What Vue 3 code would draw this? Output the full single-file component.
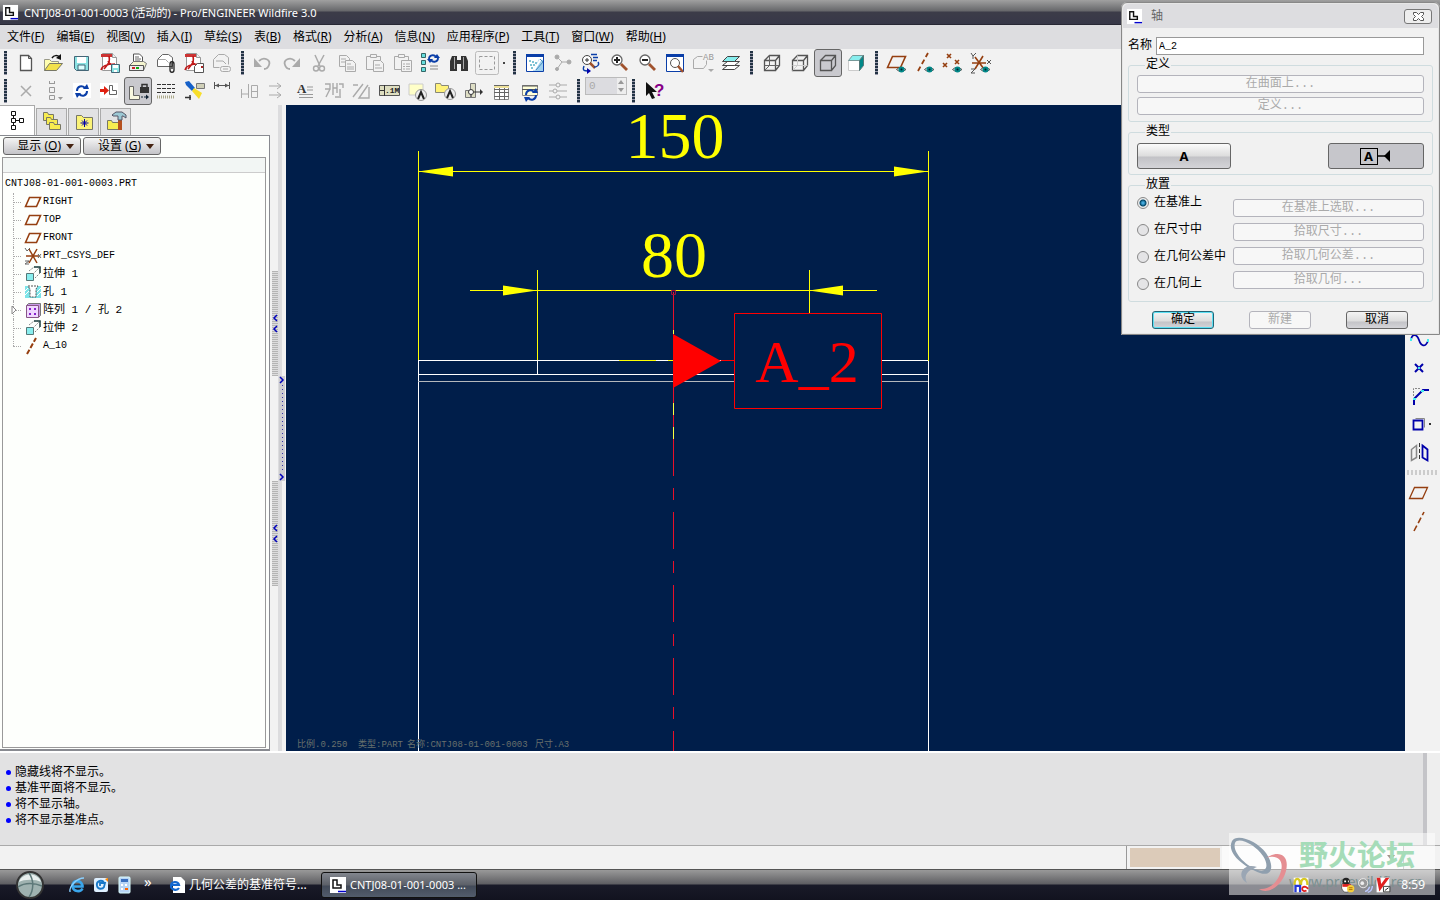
<script setup>
import { ref } from 'vue'

const menus = [
  ['文件', 'F'], ['编辑', 'E'], ['视图', 'V'], ['插入', 'I'], ['草绘', 'S'], ['表', 'B'], ['格式', 'R'],
  ['分析', 'A'], ['信息', 'N'], ['应用程序', 'P'], ['工具', 'T'], ['窗口', 'W'], ['帮助', 'H'],
]

const eye = '<path d="M11.5 18.5q4-4 9.500 0q-5 4-9.500 0z" fill="#dfeeee" stroke="#555"/><circle cx="16.500" cy="18.500" r="3" fill="#088"/><circle cx="16.500" cy="18.500" r="1" fill="#023"/>'
const pdf = '<path d="M4.500 2.500h10l4 4v13h-14z" fill="#fff" stroke="#999"/><path d="M14.500 2.500v4h4" fill="#eee" stroke="#999"/><path d="M3 3h11v3H3z" fill="#c33"/><path d="M11 5c1 5 1 6-5 13M10 10c2 4 5 5 9 5M3 19c1-5 8-6 14-6" fill="none" stroke="#c11818" stroke-width="1.600"/>'
const refresh = '<path d="M7 12c0-5 5-6 8-3M17 12c0 5-5 6-8 3" fill="none" stroke="#0a3ea8" stroke-width="2"/><path d="M13 10h6l-2-5zM11 14H5l2 5z" fill="#0a3ea8"/>'
const eyeglass = '<circle cx="10" cy="9" r="5" fill="#fff" stroke="#666" stroke-width="1.300"/><path d="M14 13l6 6" stroke="#a0522d" stroke-width="2.800"/>'
const cube = '<path d="M4.500 9.500h11v10h-11zM4.500 9.500l5-5h10v10l-4 5M15.500 9.500l4-5" fill="none" stroke="#555" stroke-width="1.300"/>'
const cubeHid = '<path d="M4.500 14.500h10M9.500 4.500v10h10M9.500 14.500l-5 5"'

const icons = {
  app: '<rect x="4" y="4" width="16" height="16" fill="#fff"/><path d="M7 7h4v5h4v3H7z" fill="none" stroke="#111" stroke-width="1.500"/><path d="M12 18.500h8" stroke="#00c" stroke-width="1.500"/>',
  new: '<path d="M6.500 4.500h8l3 3v12h-11z" fill="#fff" stroke="#555" stroke-width="1.300"/><path d="M14.500 4.500v3h3" fill="none" stroke="#555"/>',
  open: '<path d="M2.500 19.500v-11h5l2 2h7v3" fill="#ffffb0" stroke="#998"/><path d="M2.500 19.500l5-7h13l-6 7z" fill="#f2e14c" stroke="#776"/><path d="M10 7c2-3 5-3 8-1" fill="none" stroke="#111" stroke-width="1.500"/><path d="M19 3v6l-5-2z" fill="#111"/>',
  save: '<path d="M4.500 5.500h14v14h-12l-2-2z" fill="#8be3e3" stroke="#467"/><path d="M7 6h9v6H7z" fill="#fff"/><path d="M8 14h7v5H8z" fill="#dff" stroke="#467"/>',
  pdfsave: pdf + '<path d="M13.500 13.500h8v8h-8z" fill="#8be3e3" stroke="#467"/><path d="M15 14h5v3h-5zM16 19h3v2h-3z" fill="#fff"/>',
  print: '<path d="M7.500 11v-8h6l3 3v6" fill="#fff" stroke="#555"/><path d="M9 6h4M9 8h6M9 10h5" stroke="#666"/><path d="M3.500 14.500l4-4h10l3 2-3 7h-14z" fill="#f5f5d0" stroke="#777"/><path d="M3.500 14.500h14v5h-14z" fill="#eee" stroke="#555"/><path d="M6 17h3" stroke="#c22" stroke-width="2"/><path d="M10 17h3" stroke="#1a1" stroke-width="2"/>',
  mail: '<path d="M3.500 15.500v-7l5-5h6l4 3v9z" fill="#fff" stroke="#666"/><path d="M3.500 8.500h8l3 3" fill="none" stroke="#aaa"/><path d="M16 13v6c0 3 4 3 4 0v-6c0-3-4-3-4 0M18 12v6" fill="none" stroke="#222" stroke-width="1.300"/>',
  pdfmail: pdf + '<path d="M12.500 21.500v-6l3-3h6v9z" fill="#fff" stroke="#555"/><path d="M19 16h2" stroke="#a22" stroke-width="2"/>',
  maillink: '<g fill="none" stroke="#aaa"><path d="M3.500 16.500v-8l5-5h6l4 3v7M3.500 16.500h6M6 10h7l3 3"/><rect x="10.500" y="15.500" width="10" height="5" rx="2"/><path d="M13 18h5"/></g>',
  undo: '<path d="M8 10c5-5 12-1 10 4-1 3-3 4-5 4" fill="none" stroke="#aaa" stroke-width="1.800"/><path d="M3 7v9h8z" fill="#aaa"/>',
  redo: '<path d="M16 10c-5-5-12-1-10 4 1 3 3 4 5 4" fill="none" stroke="#aaa" stroke-width="1.800"/><path d="M21 7v9h-8z" fill="#aaa"/>',
  cut: '<path d="M8 4l5 11M17 4l-6 11" stroke="#aaa" stroke-width="1.500"/><circle cx="9" cy="17.500" r="2.500" fill="none" stroke="#aaa" stroke-width="1.400"/><circle cx="15" cy="17.500" r="2.500" fill="none" stroke="#aaa" stroke-width="1.400"/>',
  copy: '<g fill="#f2f2f2" stroke="#aaa"><path d="M4.500 4.500h7l3 3v8h-10z"/><path d="M10.500 9.500h7l3 3v8h-10z"/><path d="M6 8h5M6 11h4M12 13h4M12 16h7M12 18h7"/></g>',
  paste: '<g fill="#f2f2f2" stroke="#aaa"><path d="M3.500 5.500h14v13h-14z"/><path d="M7.500 3.500h6v3h-6z"/><path d="M10.500 9.500h7l3 3v8h-10z"/><path d="M12 14h5M12 17h7"/></g>',
  pastesp: '<g fill="#f2f2f2" stroke="#aaa"><path d="M3.500 5.500h14v13h-14z"/><path d="M7.500 3.500h6v3h-6z"/><path d="M10.500 9.500h10v11h-10z"/><path d="M12 13h2M15 13h4M12 15.500h2M15 15.500h4M12 18h2M15 18h4"/></g>',
  regen: '<g fill="#6dd" stroke="#366"><path d="M2.500 2.500h4v4h-4zM2.500 9.500h4v4h-4zM2.500 16.500h4v4h-4z"/></g><path d="M10 8c0-4 5-5 7-2M19 7c0 4-5 5-7 2" fill="none" stroke="#0a3ea8" stroke-width="1.800"/><path d="M15 7h6l-3-4zM14 8H8l3 4z" fill="#0a3ea8"/><path d="M11 15h8M11 18h8" stroke="#888"/>',
  find: '<path d="M5 5h5v4h4V5h5l2 5v10h-7v-7h-4v7H3V10z" fill="#333"/><path d="M7.500 6v12M16.500 6v12" stroke="#aaa"/>',
  select: '<rect x="0.500" y="0.500" width="23" height="23" rx="2" fill="none" stroke="#bbb"/><path d="M4.500 5.500h15v13h-15z" fill="none" stroke="#999" stroke-dasharray="3 2"/>',
  redraw: '<path d="M3.500 3.500h17v17h-17z" fill="#fff" stroke="#0a3ea8"/><path d="M3 3h18v3H3z" fill="#0a3ea8"/><path d="M20 20V9l-4-1-6 12z" fill="#9fd0ee"/><path d="M6 10h2M7 14h2M9 11h2M10 14h2M8 17h2M12 12h2" stroke="#08a"/><path d="M18 8l-7 11" stroke="#fff" stroke-width="2"/><path d="M17 8l3 3-7 8" fill="none" stroke="#4a90c0"/>',
  orient: '<g fill="#aaa" stroke="#aaa"><circle cx="6" cy="6" r="2"/><circle cx="6" cy="18" r="1.500"/><circle cx="18" cy="11" r="2"/><path d="M6 6l5 5h7M11 11l-5 7" fill="none"/></g>',
  spin: '<circle cx="8" cy="9" r="4.500" fill="#fff" stroke="#444"/><path d="M8 7v4M6 9h4" stroke="#333"/><path d="M11 12l5 5" stroke="#a0522d" stroke-width="2.500"/><path d="M12 3.500h6M14 6.500h5M14 9.500h4M19 11c2 3-1 5-4 5M5 15c-2 5 1 5 4 5" fill="none" stroke="#0a3ea8" stroke-width="1.400"/><path d="M8 17v6l4-3z" fill="#00a"/>',
  zin: eyeglass + '<path d="M7 9h6M10 6v6" stroke="#222" stroke-width="2"/>',
  zout: eyeglass + '<path d="M7 9h6" stroke="#222" stroke-width="2"/>',
  zfit: '<path d="M3.500 3.500h17v17h-17z" fill="#fff" stroke="#0a3ea8"/><path d="M3 3h18v3H3z" fill="#0a3ea8"/><circle cx="12" cy="12" r="4.500" fill="#fff" stroke="#555"/><path d="M15 15l5 6" stroke="#a0522d" stroke-width="2.500"/>',
  saved: '<path d="M2.500 17.500v-9l4-3h5M2.500 17.500h10l3-4v-4" fill="none" stroke="#aaa"/><text x="12" y="9" font-size="9" font-family="Liberation Mono,monospace" fill="#999">AB</text><path d="M17 18h6l-3 3z" fill="#aaa"/>',
  layers: '<path d="M3.500 18.500l5-4h12l-5 4z" fill="#fff" stroke="#444"/><path d="M3.500 14.500l5-4h12l-5 4z" fill="#fff" stroke="#444"/><path d="M3.500 10.500l5-5h12l-5 5z" fill="#8ee" stroke="#444"/>',
  wire: cube + cubeHid + ' fill="none" stroke="#666"/>',
  hidden: cube + cubeHid + ' fill="none" stroke="#ccc"/>',
  nohidden: cube,
  shaded: '<path d="M4.500 9.500h11v10h-11z" fill="#fff" stroke="#ccc"/><path d="M4.500 9.500l4-5h11l-4 5z" fill="#8ee" stroke="#799"/><path d="M15.500 9.500l4-5v10l-4 5z" fill="#088" stroke="#577"/>',
  dplane: '<path d="M2.500 16.500l5-11h13l-5 11z" fill="none" stroke="#953f10" stroke-width="1.600"/>' + eye,
  daxis: '<path d="M5 20L15 2" stroke="#953f10" stroke-width="1.800" stroke-dasharray="5 3"/>' + eye,
  dpoint: '<path d="M6 3l4 4M10 3l-4 4M2 12l4 4M6 12l-4 4M14 9l4 4M18 9l-4 4" stroke="#953f10" stroke-width="1.600"/>' + eye,
  dcsys: '<path d="M3 12h14M6 6l9 12M14 5L6 18" stroke="#953f10" stroke-width="1.600"/><path d="M2 2l2 3 3-3M4 5v3M18 9l4 4M22 9l-4 4M2 18h4l-4 4h4" fill="none" stroke="#555"/>' + eye,
  xx: '<path d="M7 7l10 10M17 7L7 17" stroke="#aaa" stroke-width="1.500"/>',
  stack: '<path d="M7.500 5V2M12.500 5V2M7.500 4.500h5M7.500 8.500h5v5h-5zM7.500 16.500h5v4h-5z" fill="none" stroke="#999"/><path d="M16 18h5l-2.500 3z" fill="#999"/>',
  update: '<path d="M3 4h18v15H3z" fill="#fff"/>' + refresh,
  insert: '<path d="M2 4h18v15H2z" fill="#fff"/><path d="M11.500 6.500v9h7v-4h-4v-5z" fill="#fff" stroke="#666"/><path d="M2 10h4V7l5 4.500-5 4.500v-3H2z" fill="#e02010"/>',
  lock: '<path d="M3.500 7.500h4v9h6v4h-10z" fill="#f7f7e0" stroke="#666"/><path d="M14 8h9v6h-9z" fill="#333"/><path d="M16 8V5.500h5V8" fill="none" stroke="#333" stroke-width="1.500"/><path d="M15 18h5" stroke="#123" stroke-dasharray="2 1"/><path d="M20 15.500l3 2.500-3 2.500z" fill="#123"/>',
  lines: '<path d="M3 5.500h18M3 9.500h18M3 13.500h18" stroke="#333" stroke-dasharray="4 1"/><path d="M3 18h18" stroke="#aaa788" stroke-width="3" stroke-dasharray="1 1"/>',
  torch: '<path d="M14.500 4.500h8v5h-8z" fill="#cfcfb8" stroke="#777"/><path d="M3 3l4-1 6 7-3 3-6-6z" fill="#1560c8"/><path d="M12 9l8 5-3 6-7-8z" fill="#f8de2a"/><path d="M3 18.500h6M8 16v5" stroke="#333" stroke-width="1.500"/>',
  dim: '<path d="M4.500 3v7M19.500 3v7M5 6.500h14" stroke="#555"/><path d="M5 6.500l4-2v4zM19 6.500l-4-2v4z" fill="#555"/>',
  dim2: '<g fill="none" stroke="#aaa"><path d="M3.500 10v9M10.500 5v14M4 15h7M13.500 6.500h6v12h-6zM13 12.500h7"/></g>',
  dim3: '<path d="M3 7h12M3 16h12M11 4l4 3-4 3M11 13l4 3-4 3" fill="none" stroke="#aaa"/>',
  note: '<text x="3" y="14" font-size="13" font-weight="bold" font-family="Liberation Serif,serif" fill="#333">A</text><path d="M13 8h6M13 11h6M5 15.500h14M5 18.500h14" stroke="#999"/>',
  sym1: '<path d="M3 5h5v5H3M8 10l-4 8M11 4v12M15 4v10M11 9h4M17 5h4v4M18 10v7M13 18h6" fill="none" stroke="#aaa" stroke-width="1.400"/>',
  sym2: '<path d="M3 18L13 5M3 6h5M18 6L9 19h10V8" fill="none" stroke="#aaa" stroke-width="1.400"/>',
  gtol: '<path d="M1.500 6.500h20v10h-20z" fill="#dedec0" stroke="#555"/><path d="M6.500 6v11M2 11.500h4" stroke="#333"/><text x="7" y="14" font-size="8" font-weight="bold" font-family="Liberation Mono,monospace" fill="#222">.1M</text>',
  surf: '<path d="M3 5h14v11H3z" fill="#ffffc8" stroke="#ccc"/><circle cx="15" cy="16" r="5.500" fill="#eee" stroke="#999"/><path d="M12 20l3-7 3 7" fill="none" stroke="#222" stroke-width="2"/>',
  symb: '<path d="M1.500 13.500v-9h5l1 2h7v7z" fill="#fff27a" stroke="#887"/><circle cx="16" cy="15" r="5.500" fill="#eee" stroke="#999"/><path d="M13 19l3-7 3 7" fill="none" stroke="#222" stroke-width="2"/>',
  bal: '<path d="M8.500 4.500h5v14h-5zM3.500 11.500h6v7h-6z" fill="#ddddc4" stroke="#777"/><circle cx="9" cy="13" r="2.500" fill="#fff" stroke="#333"/><path d="M12 13h7" stroke="#333"/><path d="M18 10l3 3-3 3z" fill="#333"/>',
  table: '<path d="M4.500 6.500h14v14h-14z" fill="#fff" stroke="#888"/><path d="M4 6h15v3H4z" fill="#eee19a"/><path d="M4 6.500h15M4 10.500h15M4 13.500h15M4 17.500h15M9.500 9v12M14.500 9v12" stroke="#666"/>',
  tableup: '<path d="M4.500 6.500h15v10h-15z" fill="#ffffd8" stroke="#888"/><path d="M4 7h16M4 10.500h16" stroke="#555"/><g transform="translate(1 4)">' + refresh + '</g>',
  sliders: '<g stroke="#aaa" fill="#f2f2f2"><path d="M3 6h18M3 12h18M3 18h18"/><circle cx="12" cy="6" r="2"/><circle cx="9" cy="12" r="2"/><circle cx="12" cy="18" r="2"/></g>',
  help: '<path d="M4 3v14l3-3 3 6 3-1-3-6h5z" fill="#111"/><text x="12" y="17" font-size="17" font-weight="bold" font-family="Liberation Sans,sans-serif" fill="#808">?</text>',
  spline: '<path d="M4 12c1-7 6-6 8 0s6 8 9 1" fill="none" stroke="#00a" stroke-width="1.800"/><path d="M4 10v3M21 11v3" stroke="#4ee" stroke-width="2"/>',
  point: '<path d="M8 8l8 8M16 8l-8 8" stroke="#00a" stroke-width="2"/><path d="M11 11h2v2h-2z" fill="#4ee"/>',
  chamfer: '<path d="M6.500 12V4.500H14" fill="none" stroke="#888" stroke-dasharray="2 1"/><path d="M7 21v-6l9-9h6" fill="none" stroke="#00a" stroke-width="2"/><path d="M6 14h3v2H6zM14 6h3v2h-3z" fill="#4ee"/>',
  offset: '<path d="M8.500 6.500h9v9" fill="none" stroke="#888"/><path d="M6.500 8.500h9v9h-9z" fill="#f2f2f2" stroke="#00a" stroke-width="1.800"/><path d="M22 11h2v2h-2z" fill="#333"/>',
  mirror: '<path d="M4.500 9.500l5-4v12l-5 3z" fill="none" stroke="#888" stroke-width="1.500"/><path d="M12.500 3v18" stroke="#333" stroke-dasharray="4 2"/><path d="M15.500 5.500l5 4v11l-5-3z" fill="none" stroke="#00a" stroke-width="1.800"/>',
  rplane: '<path d="M2.500 17.500l5-11h13l-5 11z" fill="none" stroke="#953f10" stroke-width="1.300"/>',
  raxis: '<path d="M7 22L17 3" stroke="#953f10" stroke-width="1.600" stroke-dasharray="6 3"/>',
  tplane: '<path d="M4.500 16.500l4-9h11l-4 9z" fill="none" stroke="#953f10" stroke-width="1.600"/>',
  tcsys: '<path d="M5 12h13M8 5l8 14M16 5L8 19" stroke="#953f10" stroke-width="1.500"/><path d="M4 4l2 3 3-3M17 10l3 4M20 10l-3 4M4 17h4l-4 3h4" fill="none" stroke="#666"/>',
  extrude: '<path d="M5.500 11.500h7v7h-7z" fill="#8ee" stroke="#577"/><path d="M8 9l5-4h6v6l-5 5M12 12l6-6" fill="none" stroke="#888" stroke-dasharray="2 1"/><path d="M13 5h6v6" fill="none" stroke="#244" stroke-width="1.500"/>',
  hole: '<path d="M4 6h16v12H4z" fill="#7de4e8"/><path d="M7 6h10l-2 3v8H9V9z" fill="#fff" stroke="#555" stroke-dasharray="2 1"/><path d="M4 11l3-3M4 15l4-4M16 12l4-4M16 16l4-4" stroke="#fff"/>',
  pattern: '<path d="M5.500 7.500l2-2h12v12l-2 2" fill="#c79ae6" stroke="#777"/><path d="M5.500 7.500h12v12h-12z" fill="#f0d8ff" stroke="#858"/><path d="M8 10h2v2H8zM13 10h2v2h-2zM8 15h2v2H8zM13 15h2v2h-2z" fill="#82c"/>',
  taxis: '<path d="M6 20L15 4" stroke="#953f10" stroke-width="2" stroke-dasharray="5 2"/>',
  tree: '<path d="M6.500 2.500h4v4h-4zM6.500 9.500h4v4h-4zM6.500 16.500h4v4h-4zM14.500 9.500h4v4h-4z" fill="#fff" stroke="#111"/><path d="M8.500 7v2M8.500 14v2M11 11.500h3" stroke="#111"/>',
  folders: '<g fill="#f7ec50" stroke="#776"><path d="M3.500 10.500v-8h4l1 2h5v6z"/><path d="M6.500 14.500v-7h4l1 2h6v5z"/><path d="M9.500 19.500v-7h4l1 2h6v5z"/></g>',
  fav: '<path d="M4.500 19.500v-14h5l2 2h9v12z" fill="#fbf377" stroke="#776"/><path d="M12.500 9v8M8.500 13h8M10 10.500l5 5M15 10.500l-5 5" stroke="#00a"/>',
  tools: '<path d="M3.500 19.500v-9h4l1 2h6v7z" fill="#f7ec50" stroke="#776"/><path d="M14 10h4v10h-4z" fill="#b5501e"/><path d="M8 5l4-3h6l4 3v3l-3-2h-1v4h-4V6H9z" fill="#9cc8d4" stroke="#556"/>',
  ie: '<path d="M17.500 15.500c-2 4-9 3.500-10-2-.5-7 8-7 10-1v1H8" fill="none" stroke="#3aa6ec" stroke-width="2.600"/><path d="M5 19C4 13 12 5 19 5" fill="none" stroke="#8ad0ff" stroke-width="1.300"/>',
  outlook: '<rect x="5" y="5" width="14" height="14" rx="2" fill="#dff0ff"/><path d="M15 9c-4-3-8 0-7 4 1 4 6 3 7 1l1-4h-5v3" fill="none" stroke="#1878c8" stroke-width="1.800"/><path d="M16 6l3-1v4z" fill="#f80"/>',
  calc: '<rect x="6" y="4" width="11" height="16" rx="1" fill="#b8d4f4" stroke="#dff"/><path d="M8 6h7v3H8z" fill="#3a70c0"/><path d="M8 11h2v2H8zM12 11h2v2h-2zM8 15h2v2H8z" fill="#fff"/><path d="M12 15h3v2h-3z" fill="#f60"/>',
  iepage: '<path d="M8 4h8l4 4v12H8z" fill="#fff"/><path d="M14 15c-2 3-8 2-8-2 0-5 7-5 8-1H7" fill="none" stroke="#1268d0" stroke-width="2.200"/>',
  net: '<path d="M4 4h16v16H4z" fill="#fff"/><path d="M5 12c0-9 6-9 6 0M12 12c0-9 7-9 7 0" fill="none" stroke="#d8c820" stroke-width="2.500"/><path d="M6 20v-7h5v7" fill="none" stroke="#2438d8" stroke-width="2.500"/><path d="M18 18c-5 3-7-5-1-4l3 2" fill="none" stroke="#e02020" stroke-width="2"/>',
  qq: '<ellipse cx="11" cy="14" rx="5" ry="6" fill="#fff" stroke="#555"/><circle cx="11" cy="8" r="4" fill="#222"/><path d="M7 11h9v3H7z" fill="#d22"/><path d="M9 8h2M13 8h1" stroke="#fff" stroke-width="2"/><circle cx="16" cy="16" r="4" fill="#f6cf3c"/><path d="M14 15h4M14 17h4" stroke="#a60"/>',
  speaker: '<circle cx="10" cy="10" r="5" fill="#999" stroke="#eee"/><circle cx="9" cy="10" r="2" fill="#eee"/><path d="M15 20c3-1 5-4 5-7M12 19c3 0 4-2 5-5" fill="none" stroke="#bbc8ff" stroke-width="1.500"/>',
  kav: '<path d="M5 4h14v16H5z" fill="#fff"/><path d="M5 4l3 15 11-15h-4l-5 7-1-7z" fill="#e02020"/><path d="M12.500 13.500h7v6h-7z" fill="#fff" stroke="#333"/><path d="M14 18l4-3" stroke="#111"/>',
}

const row1 = ['new', 'open', 'save', 'pdfsave', 'print', 'mail', 'pdfmail', 'maillink', '|', 'undo', 'redo', 'cut', 'copy', 'paste', 'pastesp', 'regen', 'find', 'select', '.', '|', 'redraw', 'orient', 'spin', 'zin', 'zout', 'zfit', 'saved', 'layers', '|', 'wire', 'hidden', 'nohidden', 'shaded', '|', 'dplane', 'daxis', 'dpoint', 'dcsys']
const row2 = ['xx', 'stack', 'update', 'insert', 'lock', 'lines', 'torch', 'dim', 'dim2', 'dim3', 'note', 'sym1', 'sym2', 'gtol', 'surf', 'symb', 'bal', 'table', 'tableup', 'sliders', '|']
const pressed = ['nohidden', 'lock']
const tabs = ['tree', 'folders', 'fav', 'tools']
const treeItems = [
  ['tplane', 'RIGHT'], ['tplane', 'TOP'], ['tplane', 'FRONT'], ['tcsys', 'PRT_CSYS_DEF'],
  ['extrude', '拉伸 1', true], ['hole', '孔 1', true], ['pattern', '阵列 1 / 孔 2', true], ['extrude', '拉伸 2', true], ['taxis', 'A_10'],
]
const placements = [
  ['在基准上', '在基准上选取...'], ['在尺寸中', '拾取尺寸...'], ['在几何公差中', '拾取几何公差...'], ['在几何上', '拾取几何...'],
]
const placement = ref(0)
const axisName = ref('A_2')
const count = ref('0')
const sideTools = ['spline', 'point', 'chamfer', 'offset', 'mirror', '-', 'rplane', 'raxis']
const messages = ['隐藏线将不显示。', '基准平面将不显示。', '将不显示轴。', '将不显示基准点。']
const grips = ['l', 'r', 'l']
const chevron = { l: 'M5 1L2 4l3 3', r: 'M1 1l3 3-3 3' }
</script>

<template>
  <div class="desktop">
    <header class="titlebar">
      <svg class="ic small" viewBox="3 3 18 18" v-html="icons.app"></svg>
      <span>CNTJ08-01-001-0003 (活动的) - Pro/ENGINEER Wildfire 3.0</span>
    </header>

    <nav class="menubar">
      <button v-for="m in menus" :key="m[1]">{{ m[0] }}(<u>{{ m[1] }}</u>)</button>
    </nav>

    <div class="toolbars">
      <div class="toolrow">
        <i class="sep first"></i>
        <template v-for="(t, i) in row1" :key="i">
          <i v-if="t === '|'" class="sep"></i>
          <i v-else-if="t === '.'" class="dot"></i>
          <button v-else class="tool" :class="{ pressed: pressed.includes(t) }" :aria-label="t"><svg class="ic" viewBox="0 0 24 24" v-html="icons[t]"></svg></button>
        </template>
      </div>
      <div class="toolrow">
        <i class="sep first"></i>
        <template v-for="(t, i) in row2" :key="i">
          <i v-if="t === '|'" class="sep"></i>
          <button v-else class="tool" :class="{ pressed: pressed.includes(t) }" :aria-label="t"><svg class="ic" viewBox="0 0 24 24" v-html="icons[t]"></svg></button>
        </template>
        <span class="spinner">
          <input v-model="count" aria-label="count" disabled>
          <svg width="9" height="16"><path d="M1 6l3-4 3 4zM1 10l3 4 3-4z" fill="#999" /></svg>
        </span>
        <i class="sep"></i>
        <button class="tool" aria-label="help"><svg class="ic" viewBox="0 0 24 24" v-html="icons.help"></svg></button>
      </div>
    </div>

    <main class="work">
      <aside class="nav">
        <div class="tabs">
          <button v-for="(t, i) in tabs" :key="t" :class="{ on: i === 0 }" :aria-label="t"><svg class="ic" viewBox="0 0 24 24" v-html="icons[t]"></svg></button>
        </div>
        <div class="navbody">
          <div class="navbtns">
            <button>显示 (<u>O</u>)<i class="caret"></i></button>
            <button>设置 (<u>G</u>)<i class="caret"></i></button>
          </div>
          <div class="treebox">
            <div class="treehead"></div>
            <div class="root">CNTJ08-01-001-0003.PRT</div>
            <ul>
              <li v-for="(t, i) in treeItems" :key="i" :class="{ cjk: t[2], last: i === 8 }">
                <svg v-if="i === 6" class="expand" width="6" height="10"><path d="M1 1l4 4-4 4z" fill="#fff" stroke="#888" /></svg>
                <i class="branch"></i>
                <svg class="ic tic" viewBox="0 0 24 24" v-html="icons[t[0]]"></svg>
                <span>{{ t[1] }}</span>
              </li>
            </ul>
          </div>
        </div>
      </aside>

      <div class="splitter">
        <div v-for="(g, i) in grips" :key="i" class="grip" :class="g">
          <svg v-for="n in 2" :key="n" width="6" height="8"><path :d="chevron[g]" fill="none" stroke="#00b" stroke-width="1.500" /></svg>
        </div>
      </div>

      <svg class="canvas">
        <g fill="none" stroke="#ffff00">
          <path d="M132.500 46v210M642.500 46v210M132 66.500h510M184 185.500h407M251.500 165v91M523.500 165v43" />
        </g>
        <g fill="none" stroke="#fff">
          <path d="M132.500 256v390M642.500 256v390M132 255.500h316M596 255.500h46M132 269.500h316M596 269.500h46M251.500 256v14" />
          <path d="M132 276.500h316M596 276.500h46" stroke="#b4b8bc" />
          <path d="M333 255.500h37M382 255.500h5" stroke="#ffff00" />
        </g>
        <g fill="#ffff00">
          <path d="M132 66.500l35-5v10zM642 66.500l-34-5v10zM251 185.500l-34-5v10zM523 185.500l34-5v10z" />
          <text x="389" y="53" class="cad">150</text>
          <text x="388" y="172" class="cad">80</text>
        </g>
        <g fill="none" stroke="#e8102a">
          <path d="M387.500 187v147" />
          <path d="M387.500 334v312" stroke-dasharray="37 12 12 12" />
          <path d="M385.500 185.500h4v4h-4z" stroke="#a01040" />
        </g>
        <path d="M387.500 225v4M387.500 298v12M387.500 322v12" stroke="#ffff40" />
        <path d="M387 229v54l48-27z" fill="#f00" />
        <path d="M435 255.500h13M448.500 208.500h147v95h-147z" fill="none" stroke="#f00" />
        <text x="521" y="277" class="cad tag">A_2</text>
        <g class="info">
          <text x="11" y="642">比例.0.250</text>
          <text x="72" y="642">类型:PART</text>
          <text x="121" y="642">名称:CNTJ08-01-001-0003</text>
          <text x="249" y="642">尺寸.A3</text>
        </g>
      </svg>

      <div class="side">
        <template v-for="t in sideTools" :key="t">
          <i v-if="t === '-'" class="hgrip"></i>
          <button v-else class="tool" :aria-label="t"><svg class="ic wide" viewBox="0 0 24 24" v-html="icons[t]"></svg></button>
        </template>
      </div>
    </main>

    <section class="messages">
      <ul><li v-for="m in messages" :key="m">{{ m }}</li></ul>
    </section>

    <div class="status"><span class="block"></span><span class="filter"><i class="caret"></i></span></div>

    <footer class="taskbar">
      <button class="orb" aria-label="start"><svg width="30" height="30"><circle cx="15" cy="15" r="13" fill="#9fb2b0" stroke="#333" stroke-width="2" /><path d="M4 12c3-10 19-10 22 0-5-3-17-3-22 0z" fill="#e8efee" /><path d="M14 3c5 7 5 17 0 24M3 17c7-5 17-4 24-1" fill="none" stroke="#5d7878" stroke-width="1.500" /></svg></button>
      <div class="quick">
        <button aria-label="ie"><svg class="ic" viewBox="0 0 24 24" v-html="icons.ie"></svg></button>
        <button aria-label="outlook"><svg class="ic" viewBox="0 0 24 24" v-html="icons.outlook"></svg></button>
        <button aria-label="calc"><svg class="ic" viewBox="0 0 24 24" v-html="icons.calc"></svg></button>
        <span class="more">»</span>
      </div>
      <button class="task"><svg class="ic" viewBox="0 0 24 24" v-html="icons.iepage"></svg>几何公差的基准符号...</button>
      <button class="task active"><svg class="ic" viewBox="0 0 24 24" v-html="icons.app"></svg>CNTJ08-01-001-0003 ...</button>
      <div class="tray">
        <svg class="ic net" viewBox="0 0 24 24" v-html="icons.net"></svg>
        <svg class="ic" viewBox="0 0 24 24" v-html="icons.qq"></svg>
        <svg class="ic" viewBox="0 0 24 24" v-html="icons.speaker"></svg>
        <svg class="ic" viewBox="0 0 24 24" v-html="icons.kav"></svg>
        <time>8:59</time>
      </div>
    </footer>

    <section class="dialog" role="dialog" aria-labelledby="dlg-title">
      <div class="dhead">
        <svg class="ic small" viewBox="3 3 18 18" v-html="icons.app"></svg>
        <span id="dlg-title">轴</span>
        <button class="close" aria-label="close"><svg width="13" height="11"><path d="M1.500 1.500h3l2 2 2-2h3v2l-2 2 2 2v2h-3l-2-2-2 2h-3v-2l2-2-2-2z" fill="#fff" stroke="#555" /></svg></button>
      </div>
      <div class="dbody">
        <div class="name"><label for="axis-name">名称</label><input id="axis-name" v-model="axisName"></div>
        <fieldset class="def">
          <legend>定义</legend>
          <button class="btn" disabled>在曲面上...</button>
          <button class="btn" disabled>定义...</button>
        </fieldset>
        <fieldset class="type">
          <legend>类型</legend>
          <div class="types">
            <button class="btn kind">A</button>
            <button class="btn kind down"><span class="boxed">A</span><svg width="15" height="14"><path d="M0 7h9" stroke="#000" stroke-width="1.500" /><path d="M12 1v12L6 7z" /></svg></button>
          </div>
        </fieldset>
        <fieldset class="place">
          <legend>放置</legend>
          <div class="cols">
            <div class="radios">
              <label v-for="(p, i) in placements" :key="i"><input type="radio" name="place" :value="i" v-model="placement">{{ p[0] }}</label>
            </div>
            <div class="picks"><button v-for="p in placements" :key="p[1]" class="btn" disabled>{{ p[1] }}</button></div>
          </div>
        </fieldset>
        <div class="actions">
          <button class="btn solid default">确定</button>
          <button class="btn" disabled>新建</button>
          <button class="btn solid">取消</button>
        </div>
      </div>
    </section>

    <div class="watermark">
      <svg width="60" height="60" viewBox="0 0 60 60">
        <path fill-rule="evenodd" d="M3 8C8 0 28 8 37 20c9 13 6 24-6 20C15 34-3 20 3 8zM6 10c-3 9 11 23 23 27 9 3 11-5 5-14C27 12 9 3 6 10z" fill="#8f9fae" />
        <path d="M37 25c12-8 24-4 20 13-4 15-18 24-27 18 12 1 19-8 22-18 3-11-4-17-15-13z" fill="#e58e92" />
        <path d="M28 34c-13-5-22 8-10 16-4-8 1-13 10-16z" fill="#9aa6b4" />
      </svg>
      <div class="wmtext"><strong>野火论坛</strong><span>www.proewildfire.cn</span></div>
    </div>
  </div>
</template>

<style>
html, body { margin: 0; height: 100%; overflow: hidden; }
#app { height: 100%; }
</style>

<style scoped>
.desktop {
  position: relative; height: 100vh; display: flex; flex-direction: column; background: #f2f2f2; color: #000;
  font: 12px/16px "Noto Sans", "Noto Sans CJK SC", sans-serif;
}
button { border: 0; padding: 0; margin: 0; background: none; color: inherit; font: inherit; }
ul { list-style: none; margin: 0; padding: 0; }
.ic { width: 24px; height: 24px; display: block; flex: none; }
.ic.small { width: 17px; height: 17px; }

.titlebar {
  height: 25px; flex: none; display: flex; align-items: center; gap: 5px; padding-left: 2px; color: #fff;
  background: linear-gradient(#a0a0a0, #66676a 11px, #3c3c48 12px, #373848 24px, #181820 25px); font-size: 11px;
}
.menubar { height: 24px; flex: none; display: flex; align-items: center; gap: 12px; padding-left: 7px; background: #dddde0; white-space: nowrap; }
.toolbars { height: 56px; flex: none; background: #f2f2f2; }
.toolrow { height: 28px; display: flex; align-items: center; }
.tool { width: 28px; height: 28px; flex: none; display: flex; align-items: center; justify-content: center; box-sizing: border-box; }
.tool.pressed { border: 1px solid #666; border-radius: 3px; background: #c9c9ce; }
.sep { width: 3px; height: 24px; margin: 0 5px; flex: none; background: repeating-linear-gradient(#234 0 2px, #99a 2px 3px); }
.sep.first { margin: 0 5px 0 4px; }
.dot { width: 2px; height: 2px; margin: 0 3px 0 2px; background: #444; }
.spinner { width: 42px; height: 18px; box-sizing: border-box; border: 1px solid #bbb; display: flex; align-items: center; background: #dcdce0; align-self: flex-start; }
.spinner input { width: 100%; min-width: 0; border: 0; padding: 0 3px; background: none; color: #aaa; font: 11px/14px "Liberation Mono", monospace; }
.spinner svg { flex: none; background: #eee; }

.work { flex: 1; min-height: 0; display: grid; grid-template-columns: 270px 16px 1fr 35px; }
.nav { display: flex; flex-direction: column; min-height: 0; }
.tabs { height: 30px; flex: none; display: flex; gap: 1px; align-items: flex-end; }
.tabs button { width: 31px; height: 27px; box-sizing: border-box; border: 1px solid #aaa; border-bottom: 0; background: #e2e2e4; display: grid; place-items: center; }
.tabs .on { width: 35px; height: 30px; border-left: 0; background: #fff; }
.navbody { flex: 1; min-height: 0; display: flex; flex-direction: column; background: #fdfffc; border: solid #888a90; border-width: 1px 1px 2px 0; padding: 1px 3px 1px 2px; }
.navbtns { display: flex; gap: 2px; height: 20px; flex: none; padding-left: 1px; }
.navbtns button { width: 78px; height: 18px; border: 1px solid #666; border-radius: 3px; background: linear-gradient(#f4f4f4, #c4c4c8); display: flex; align-items: center; justify-content: flex-end; box-sizing: border-box; padding-right: 6px; }
.caret { border: 4px solid transparent; border-top: 5px solid #421; border-bottom: 0; margin-left: 5px; }
.treebox { flex: 1; min-height: 0; border: 1px solid #999; font: 10px/18px "Liberation Mono", "Noto Sans CJK SC", monospace; }
.treehead { height: 14px; background: #f2f6f4; border-bottom: 1px solid #ccc; margin-bottom: 2px; }
.root { padding-left: 2px; }
.treebox li { position: relative; height: 18px; display: flex; align-items: center; padding-left: 10px; }
.treebox li::before { content: ""; position: absolute; left: 10px; top: 0; bottom: 0; border-left: 1px dotted #aaa; }
.treebox li.last::before { bottom: 9px; }
.branch { width: 8px; border-top: 1px dotted #aaa; }
.tic { margin-right: -2px; }
.treebox li.cjk { font-size: 11px; }
.expand { position: absolute; left: 8px; z-index: 1; }

.splitter { display: flex; flex-direction: column; justify-content: center; background: linear-gradient(90deg, #f2f2f2 8px, #dcdcde 8px 12px, #f2f2f2 12px); }
.grip { height: 105px; width: 6px; margin-left: 2px; display: flex; flex-direction: column; align-items: center; justify-content: center; gap: 3px; background: repeating-linear-gradient(#b4b4b4 0 1px, #ddd 1px 2px); }
.grip.r { margin-left: 9px; justify-content: space-between; background: repeating-linear-gradient(#33a 0 1px, transparent 1px 4px) center / 1px 86px no-repeat, #cdcdd0; }

.canvas { width: 100%; height: 100%; background: #001e4a; display: block; overflow: visible; }
.cad { font: 66px "Liberation Serif", serif; text-anchor: middle; }
.tag { font-size: 60px; fill: #f00; }
.info { font: 9px "Liberation Mono", "Noto Sans CJK SC", monospace; fill: #68706c; }
.side { padding: 221px 0 0 0; display: flex; flex-direction: column; }
.wide { overflow: visible; }
.hgrip { height: 5px; margin: 4px 2px; background: repeating-linear-gradient(90deg, #ccc 0 2px, #f2f2f2 2px 4px); }

.messages { position: relative; height: 95px; flex: none; box-sizing: border-box; border-top: 2px solid #fff; border-bottom: 1px solid #aaa; background: linear-gradient(90deg, transparent calc(100% - 17px), #c4c4c8 calc(100% - 17px) calc(100% - 13px), #eee calc(100% - 13px)), #e2e2e3; padding: 11px 0 0 6px; }
.messages li { display: flex; align-items: center; gap: 4px; }
.messages li::before { content: ""; width: 5px; height: 5px; border-radius: 3px; background: #00f; }
.status { height: 23px; flex: none; display: flex; justify-content: flex-end; background: #f2f2f2; }
.block { width: 90px; border: 2px solid #f2f2f2; border-left: 3px solid #f2f2f2; background: #dccbb9; box-shadow: -1px 0 #999; }
.filter { width: 182px; box-sizing: border-box; border-right: 1px solid #aaa; margin-right: 36px; background: #fafafa; display: flex; align-items: center; justify-content: flex-end; padding-right: 8px; }

.taskbar { height: 31px; flex: none; display: flex; align-items: center; color: #fff; border-top: 1px solid #555; box-sizing: border-box; background: linear-gradient(#999 0, #5e5e62 14px, #191a28 15px, #12131f); padding-right: 15px; }
.orb { margin-left: 15px; width: 30px; height: 30px; }
.quick { display: flex; align-items: center; margin-left: 20px; width: 100px; }
.quick .more { margin: 0 0 8px 7px; font-size: 15px; }
.task { width: 156px; height: 26px; box-sizing: border-box; display: flex; align-items: center; white-space: nowrap; }
.task.active { border: 1px solid #111; border-radius: 3px; background: linear-gradient(#82868e, #5c6068 12px, #424a58 13px, #525c6c); padding-left: 4px; font-size: 11px; }
.tray { margin-left: auto; display: flex; align-items: center; position: relative; z-index: 3; }
.tray .ic { width: 22px; height: 22px; margin: 0 -2px; }
.tray .net { margin-right: 26px; }
.tray time { margin-left: 9px; }

.dialog { position: absolute; top: 2px; right: 0; width: 319px; box-sizing: border-box; border: 2px solid #e6e6e6; outline: 1px solid #888; outline-offset: -1px; border-radius: 6px 6px 0 0; background: #f1f1f1; z-index: 4; }
.dhead { height: 24px; display: flex; align-items: center; gap: 8px; padding: 0 6px 0 3px; background: #dddde0; color: #666; border-radius: 5px 5px 0 0; }
.close { margin-left: auto; width: 28px; height: 15px; border: 1px solid #777; border-radius: 3px; display: grid; place-items: center; box-sizing: border-box; background: #eee; }
.dbody { padding: 9px 5px 4px; font-family: "Liberation Mono", "Noto Sans CJK SC", monospace; }
.name { display: flex; align-items: center; gap: 4px; height: 18px; margin-bottom: 2px; padding-right: 9px; }
.name input { flex: 1; min-width: 0; height: 18px; box-sizing: border-box; border: 1px solid #999; padding: 0 2px; background: #fff; font: 10px "Liberation Mono", monospace; }
fieldset { margin: 0 0 2px; border: 1px solid #cfdcdf; border-radius: 3px; padding: 0 8px; min-width: 0; }
legend { padding: 0 1px; margin-left: 8px; line-height: 16px; }
.btn { height: 18px; box-sizing: border-box; border: 1px solid #666; border-radius: 3px; display: flex; align-items: center; justify-content: center; }
.btn:disabled { color: #aaa; border-color: #b4b4bc; background: #f7f7f7; }
.def { padding-bottom: 6px; }
.def .btn { width: 100%; margin-top: 4px; }
.def legend + .btn { margin-top: 2px; }
.types { display: flex; justify-content: space-between; padding: 3px 0 5px; }
.kind { height: 26px; width: 94px; background: linear-gradient(#fbfbfb, #ddd 12px, #c2c2c6 13px, #d4d4d8); font: bold 13px "Noto Sans", sans-serif; }
.kind.down { width: 96px; background: #c6c6cb; }
.boxed { border: 1px solid #000; width: 16px; height: 15px; line-height: 15px; text-align: center; }
.cols { display: flex; justify-content: space-between; padding: 0 0 9px; }
.radios { display: flex; flex-direction: column; gap: 11px; padding-top: 2px; }
.radios label { display: flex; align-items: center; gap: 5px; height: 16px; white-space: nowrap; }
.radios input { appearance: none; width: 12px; height: 12px; margin: 0; border: 1px solid #888; border-radius: 50%; background: #e4e4e6; }
.radios input:checked { background: radial-gradient(circle, #4ad 0 1px, #046 3px, #eee 4px); }
.picks { width: 191px; display: flex; flex-direction: column; gap: 6px; padding-top: 6px; }
.actions { display: flex; gap: 35px; padding: 7px 0 0 24px; }
.actions .btn { width: 62px; }
.solid { background: linear-gradient(#f4f4f4, #ddd 9px, #c4c4c8 10px, #d4d4d8); }
.default { border-color: #267; box-shadow: inset 0 0 0 1px #5ce0f4; }

.watermark { position: absolute; right: 5px; bottom: 5px; width: 206px; height: 62px; display: flex; background: rgba(255, 255, 255, .5); z-index: 2; pointer-events: none; }
.watermark svg { flex: none; }
.wmtext { display: flex; flex-direction: column; flex: 1; min-width: 0; }
.wmtext strong { margin-left: 10px; font: bold 29px/40px "Noto Sans CJK SC", sans-serif; color: #a5dcb8; white-space: nowrap; }
.wmtext span { font: 14px/18px "Noto Sans", sans-serif; color: #7b9090; white-space: nowrap; }
</style>
